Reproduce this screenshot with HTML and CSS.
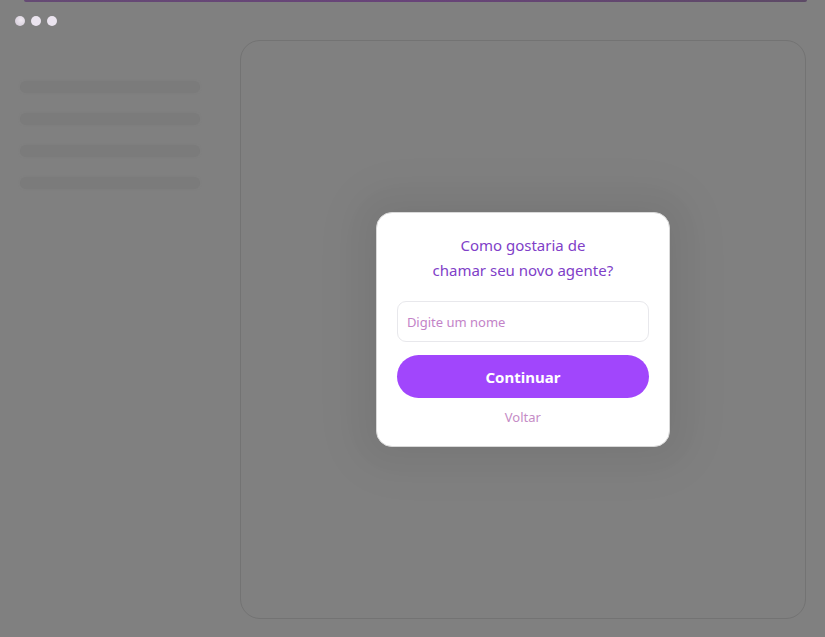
FILE: index.html
```html
<!DOCTYPE html>
<html lang="pt">
<head>
<meta charset="utf-8">
<link rel="stylesheet" href="styles.css">
<title>Novo agente</title>
</head>
<body>
<div class="page">
  <div class="topbar"></div>
  <div class="dots"><span class="dot dot-first"></span><span class="dot"></span><span class="dot"></span></div>
  <div class="layout">
    <aside class="sidebar">
      <div class="bar"></div>
      <div class="bar"></div>
      <div class="bar"></div>
      <div class="bar"></div>
    </aside>
    <main class="card">
      <div class="modal">
        <h2 class="title">Como gostaria de<br>chamar seu novo agente?</h2>
        <input class="field" type="text" placeholder="Digite um nome">
        <button class="primary">Continuar</button>
        <a class="back" href="#">Voltar</a>
      </div>
    </main>
  </div>
</div>
</body>
</html>
```
FILE: styles.css
```css
* { box-sizing: border-box; }
html, body { margin: 0; padding: 0; }
body {
  background: #808080;
  font-family: "Noto Sans", "Open Sans", sans-serif;
  width: 825px;
  height: 637px;
  overflow: hidden;
}
.page {
  position: relative;
  height: 637px;
}
.topbar {
  height: 2px;
  margin: 0 18px 0 24px;
  background: linear-gradient(90deg, #654a74, #684379 50%, #5d4a66);
  border-radius: 0 0 2px 2px;
}
.dots {
  display: flex;
  gap: 6px;
  padding: 14px 0 0 15px;
  height: 26px;
}
.dot {
  width: 10px;
  height: 10px;
  border-radius: 50%;
  background: #ebe4ef;
}
.dot-first { background: radial-gradient(circle at 60% 40%, #f0eaf2, #cfc6d4); }
.layout {
  display: flex;
  padding: 12px 19px 0 19px;
}
.sidebar {
  width: 221px;
  padding: 41px 40px 0 1px;
  display: flex;
  flex-direction: column;
  gap: 20px;
}
.bar {
  height: 12px;
  border-radius: 6px;
  background: #7b7b7b;
  box-shadow: 0 0 2px #7c7c7c;
}
.card {
  width: 567px;
  height: 579px;
  border: 1px solid #737373;
  border-radius: 20px;
  display: flex;
  align-items: center;
  justify-content: center;
}
.modal {
  width: 294px;
  height: 235px;
  background: #fff;
  border-radius: 16px;
  border: 1px solid #d9d9d9;
  box-shadow: 0 0 30px 16px rgba(0,0,0,0.045), 0 0 50px 30px rgba(0,0,0,0.025);
  padding: 20px 20px 0;
  display: flex;
  flex-direction: column;
  align-items: stretch;
}
.title {
  margin: 0;
  font-weight: 400;
  font-size: 15px;
  line-height: 25px;
  color: #8040c8;
  text-align: center;
}
.field {
  margin-top: 18px;
  height: 41px;
  border: 1px solid #e8e8ec;
  border-radius: 9px;
  padding: 0 9px;
  font-family: inherit;
  font-size: 13px;
  color: #333;
  outline: none;
}
.field::placeholder { color: #c383c8; }
.primary {
  margin-top: 13px;
  height: 43px;
  border: none;
  border-radius: 22px;
  background: #a146fc;
  color: #fff;
  font-family: inherit;
  font-size: 15px;
  font-weight: 700;
}
.back {
  margin-top: 10px;
  text-align: center;
  font-size: 13px;
  line-height: 18px;
  color: #c58cc6;
  text-decoration: none;
}
```
